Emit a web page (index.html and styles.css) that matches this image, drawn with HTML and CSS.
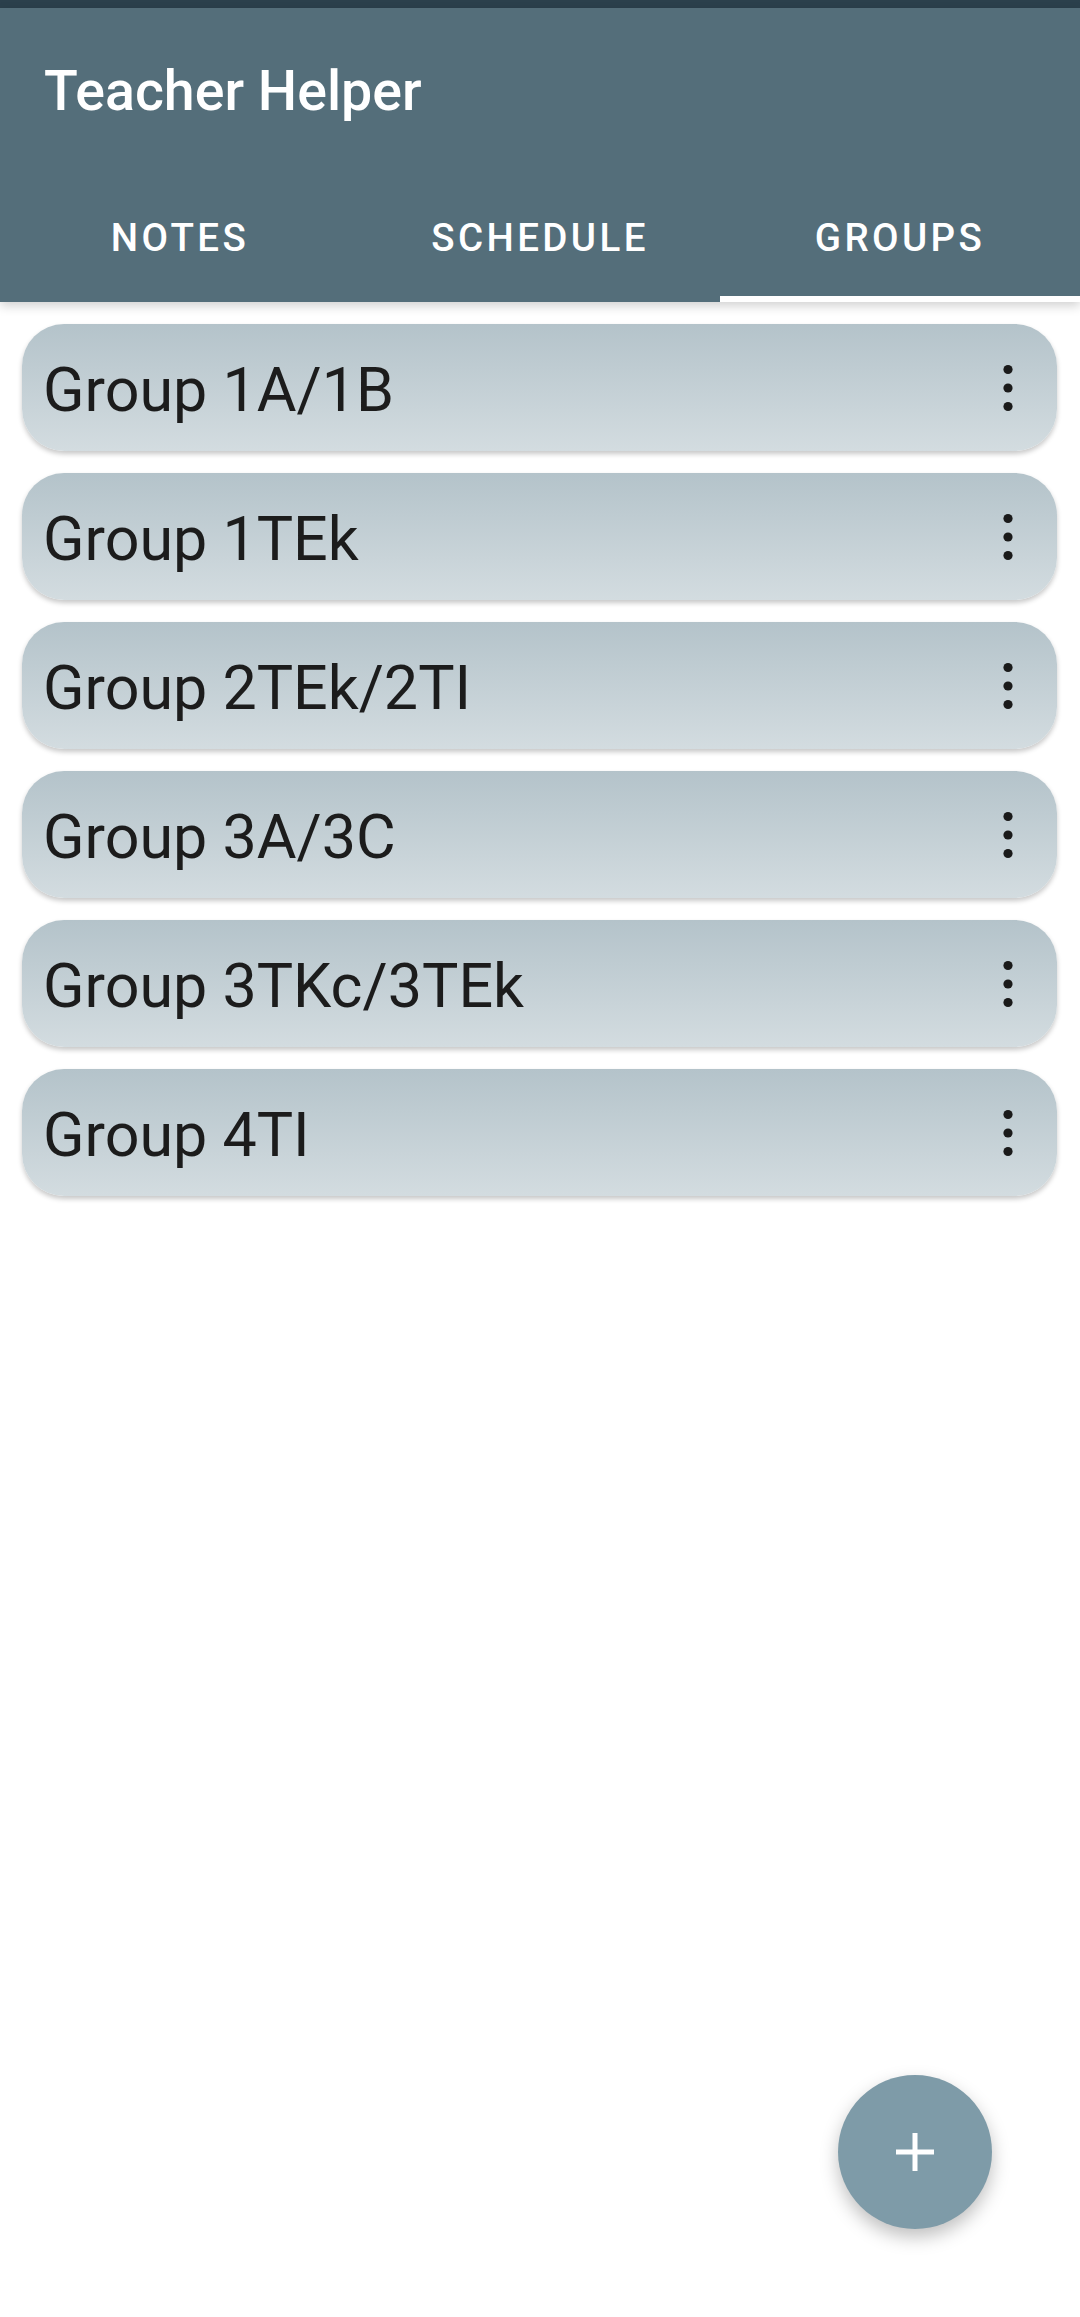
FILE: index.html
```html
<!DOCTYPE html>
<html>
<head>
<meta charset="utf-8">
<link rel="stylesheet" href="styles.css">
</head>
<body>
<div class="status"></div>
<header class="appbar">
  <div class="toolbar"><h1 class="title">Teacher Helper</h1></div>
  <nav class="tabs">
    <div class="tab">NOTES</div>
    <div class="tab">SCHEDULE</div>
    <div class="tab active">GROUPS</div>
  </nav>
</header>
<main class="list">
  <div class="card"><span class="name">Group 1A/1B</span><svg class="more" viewBox="0 0 30 56"><circle cx="15" cy="9.5" r="4.6"/><circle cx="15" cy="28" r="4.6"/><circle cx="15" cy="46.5" r="4.6"/></svg></div>
  <div class="card"><span class="name">Group 1TEk</span><svg class="more" viewBox="0 0 30 56"><circle cx="15" cy="9.5" r="4.6"/><circle cx="15" cy="28" r="4.6"/><circle cx="15" cy="46.5" r="4.6"/></svg></div>
  <div class="card"><span class="name">Group 2TEk/2TI</span><svg class="more" viewBox="0 0 30 56"><circle cx="15" cy="9.5" r="4.6"/><circle cx="15" cy="28" r="4.6"/><circle cx="15" cy="46.5" r="4.6"/></svg></div>
  <div class="card"><span class="name">Group 3A/3C</span><svg class="more" viewBox="0 0 30 56"><circle cx="15" cy="9.5" r="4.6"/><circle cx="15" cy="28" r="4.6"/><circle cx="15" cy="46.5" r="4.6"/></svg></div>
  <div class="card"><span class="name">Group 3TKc/3TEk</span><svg class="more" viewBox="0 0 30 56"><circle cx="15" cy="9.5" r="4.6"/><circle cx="15" cy="28" r="4.6"/><circle cx="15" cy="46.5" r="4.6"/></svg></div>
  <div class="card"><span class="name">Group 4TI</span><svg class="more" viewBox="0 0 30 56"><circle cx="15" cy="9.5" r="4.6"/><circle cx="15" cy="28" r="4.6"/><circle cx="15" cy="46.5" r="4.6"/></svg></div>
</main>
<button class="fab" aria-label="Add"><svg viewBox="0 0 38 38"><rect x="0" y="16.5" width="38" height="5" fill="#fff"/><rect x="16.5" y="0" width="5" height="38" fill="#fff"/></svg></button>
</body>
</html>
```
FILE: styles.css
```css
html, body {
  margin: 0;
  padding: 0;
  background: #ffffff;
  font-family: Roboto, "Noto Sans", "Liberation Sans", sans-serif;
}
body {
  width: 1080px;
  height: 2317px;
  position: relative;
  overflow: hidden;
}
.status {
  height: 8px;
  background: #2b404c;
}
.appbar {
  background: #546e7a;
  color: #ffffff;
  box-shadow: 0 4px 10px rgba(0, 0, 0, 0.18);
  position: relative;
  z-index: 2;
}
.toolbar {
  height: 163px;
  padding: 52px 0 0 44px;
  box-sizing: border-box;
}
.title {
  margin: 0;
  font-size: 55.5px;
  font-weight: 500;
  line-height: 64px;
  letter-spacing: 0;
}
.tabs {
  display: flex;
  height: 131px;
}
.tab {
  flex: 1;
  display: flex;
  align-items: center;
  justify-content: center;
  font-size: 38.5px;
  font-weight: 500;
  letter-spacing: 3.4px;
  padding-top: 1px;
}
.tab.active {
  box-shadow: inset 0 -6px 0 #ffffff;
}
.list {
  display: flex;
  flex-direction: column;
  gap: 22px;
  padding: 22px 23px 0 22px;
}
.card {
  height: 127px;
  border-radius: 42px;
  background: linear-gradient(180deg, #b4c3ca 0%, #d3dce0 100%);
  box-shadow: 0 3px 5px rgba(0, 0, 0, 0.22);
  display: flex;
  align-items: center;
  justify-content: space-between;
  padding: 0 34px 0 21px;
  box-sizing: border-box;
}
.name {
  font-size: 61px;
  color: #1c1c1c;
  font-weight: 400;
  padding-top: 4px;
}
.more {
  width: 30px;
  height: 56px;
  fill: #1a1a1a;
}
.fab {
  position: absolute;
  left: 838px;
  top: 2075px;
  width: 154px;
  height: 154px;
  border-radius: 50%;
  border: none;
  padding: 0;
  background: #7e9ba8;
  box-shadow: 0 8px 18px rgba(0, 0, 0, 0.25);
  display: flex;
  align-items: center;
  justify-content: center;
}
.fab svg {
  width: 38px;
  height: 38px;
}
```
